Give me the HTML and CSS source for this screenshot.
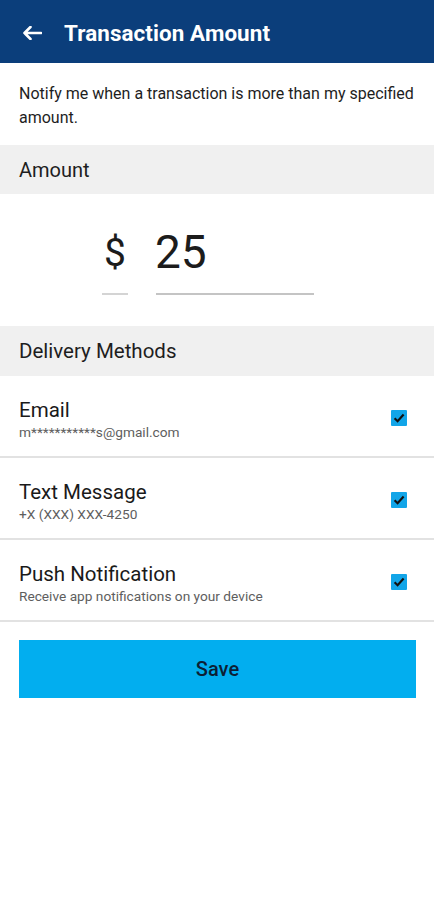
FILE: index.html
```html
<!DOCTYPE html>
<html lang="en">
<head>
<meta charset="utf-8">
<title>Transaction Amount</title>
<link rel="stylesheet" href="styles.css">
</head>
<body>
<header class="appbar">
  <svg class="back" width="20" height="14" viewBox="0 0 20 14" aria-hidden="true">
    <path d="M19 7H2.5M8.5 1L2.5 7L8.5 13" fill="none" stroke="#fff" stroke-width="2.6" stroke-linecap="round" stroke-linejoin="round"/>
  </svg>
  <h1 class="title">Transaction Amount</h1>
</header>

<p class="desc">Notify me when a transaction is more than my specified amount.</p>

<div class="section">Amount</div>

<div class="amount">
  <div class="field field-cur"><span>$</span></div>
  <div class="field field-val"><span>25</span></div>
</div>

<div class="section section-lg">Delivery Methods</div>

<ul class="methods">
  <li class="method">
    <div class="method-text">
      <div class="method-title">Email</div>
      <div class="method-sub">m***********s@gmail.com</div>
    </div>
    <span class="check"><svg width="16" height="16" viewBox="0 0 16 16"><path d="M3.6 8.2L6.6 11.2L12.6 4.6" fill="none" stroke="#111" stroke-width="2.2"/></svg></span>
  </li>
  <li class="method">
    <div class="method-text">
      <div class="method-title">Text Message</div>
      <div class="method-sub">+X (XXX) XXX-4250</div>
    </div>
    <span class="check"><svg width="16" height="16" viewBox="0 0 16 16"><path d="M3.6 8.2L6.6 11.2L12.6 4.6" fill="none" stroke="#111" stroke-width="2.2"/></svg></span>
  </li>
  <li class="method">
    <div class="method-text">
      <div class="method-title">Push Notification</div>
      <div class="method-sub">Receive app notifications on your device</div>
    </div>
    <span class="check"><svg width="16" height="16" viewBox="0 0 16 16"><path d="M3.6 8.2L6.6 11.2L12.6 4.6" fill="none" stroke="#111" stroke-width="2.2"/></svg></span>
  </li>
</ul>

<div class="actions">
  <button class="save">Save</button>
</div>
</body>
</html>
```
FILE: styles.css
```css
* { box-sizing: border-box; }
html, body { margin: 0; padding: 0; background: #fff; }
body {
  font-family: Roboto, "Liberation Sans", Arial, sans-serif;
  color: #1c1c1c;
  width: 434px;
}
.appbar {
  height: 63px;
  background: #0b3e7b;
  display: flex;
  align-items: center;
  padding-left: 22px;
  gap: 22px;
}
.back { display: block; margin-top: 2px; }
.title {
  margin: 2px 0 0;
  color: #fff;
  font-size: 22.4px;
  font-weight: 700;
  letter-spacing: 0.1px;
}
.desc {
  margin: 0;
  padding: 19px 19px 0;
  font-size: 16px;
  line-height: 24px;
  color: #1e1e1e;
  height: 82px;
}
.section {
  height: 49px;
  background: #f0f0f0;
  display: flex;
  align-items: center;
  padding-left: 19px;
  font-size: 20px;
  color: #1e1e1e;
}
.section-lg { height: 50px; font-size: 20.5px; }
.amount {
  height: 132px;
  display: flex;
  align-items: flex-start;
  padding: 36px 0 0 102px;
  gap: 28px;
}
.field {
  border-bottom: 2px solid #c4c4c4;
  height: 65px;
  display: flex;
  align-items: flex-end;
  padding-bottom: 18px;
}
.field-cur {
  width: 26px;
  justify-content: center;
  font-size: 39px;
  border-bottom-color: #d4d4d4;
}
.field-cur span { line-height: 1; padding-bottom: 2px; }
.field-val {
  width: 158px;
  font-size: 46px;
}
.field-val span { line-height: 1; margin-left: -1px; }
.methods { list-style: none; margin: 0; padding: 0; }
.method {
  height: 82px;
  border-bottom: 2px solid #e2e2e2;
  display: flex;
  align-items: flex-start;
  padding: 22px 27px 0 19px;
}
.method-text { flex: 1; }
.method-title {
  font-size: 20.5px;
  line-height: 24px;
  color: #1a1a1a;
}
.method-sub {
  font-size: 13.7px;
  line-height: 18px;
  color: #5e5e5e;
  margin-top: 1px;
}
.check {
  width: 16px;
  height: 16px;
  margin-top: 12px;
  background: #12a5e8;
  border-radius: 1px;
  display: block;
}
.check svg { display: block; }
.actions { padding: 18px 18px 0 19px; }
.save {
  display: block;
  width: 100%;
  height: 58px;
  border: none;
  border-radius: 0;
  background: #02aeef;
  color: #0c1f35;
  font-family: Roboto, "Liberation Sans", Arial, sans-serif;
  font-size: 20px;
  font-weight: 500;
}
```
